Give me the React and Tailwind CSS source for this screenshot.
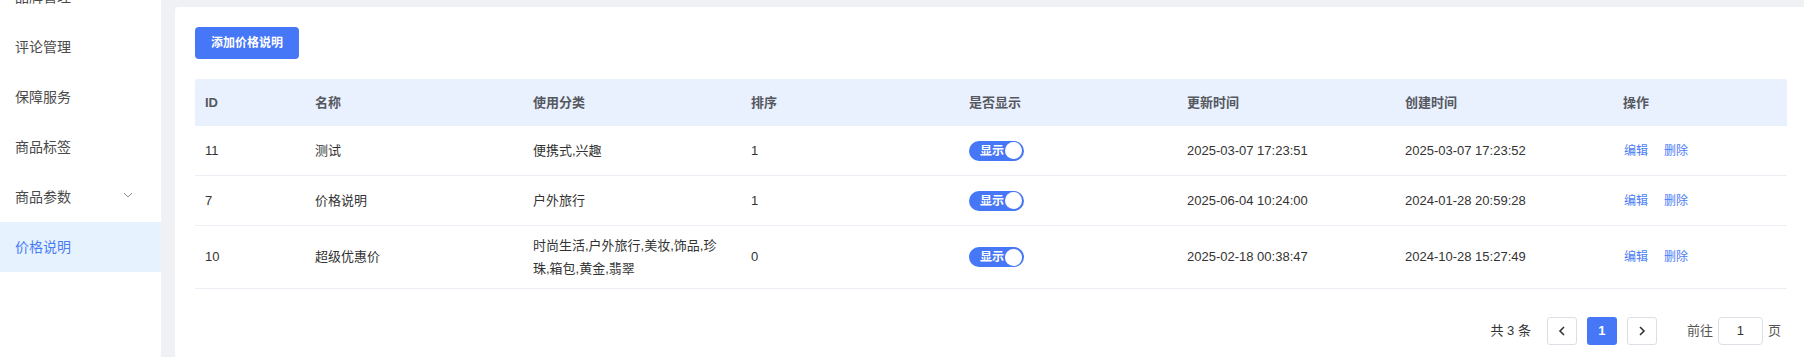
import React from "react";

const menu = [
  { name: "品牌管理" },
  { name: "评论管理" },
  { name: "保障服务" },
  { name: "商品标签" },
  { name: "商品参数", sub: true },
  { name: "价格说明", active: true },
];

const rows = [
  { id: 11, name: "测试", cats: "便携式,兴趣", sort: 1, updated: "2025-03-07 17:23:51", created: "2025-03-07 17:23:52" },
  { id: 7, name: "价格说明", cats: "户外旅行", sort: 1, updated: "2025-06-04 10:24:00", created: "2024-01-28 20:59:28" },
  {
    id: 10,
    name: "超级优惠价",
    cats: "时尚生活,户外旅行,美妆,饰品,珍珠,箱包,黄金,翡翠",
    sort: 0,
    updated: "2025-02-18 00:38:47",
    created: "2024-10-28 15:27:49",
    tall: true,
  },
];

const Switch = () => {
  return (
    <div className="flex items-center w-[55px] h-[20px] rounded-full bg-[#4677f6] pl-[11px] pr-[2px]">
      <span className="text-[12px] font-bold text-white leading-none">显示</span>
      <span className="ml-auto w-[17px] h-[17px] rounded-full bg-white"></span>
    </div>
  );
};

const Sidebar = () => {
  return (
    <aside className="w-[161px] shrink-0 bg-white">
      <ul className="-mt-[28px]">
        {menu.map((m) => (
          <li
            key={m.name}
            className={
              m.active
                ? "h-[50px] flex items-center pl-[15px] pr-[28px] text-[14px] text-[#4a7cf6] bg-[#e6f2fe]"
                : "h-[50px] flex items-center pl-[15px] pr-[28px] text-[14px] text-[#4a4a4a]"
            }
          >
            <span>{m.name}</span>
            {m.sub && (
              <svg className="ml-auto mt-[-4px]" width="10" height="6" viewBox="0 0 10 6" fill="none">
                <path d="M1 1l4 4 4-4" stroke="#8a8d93" strokeWidth="1" />
              </svg>
            )}
          </li>
        ))}
      </ul>
    </aside>
  );
};

const cols = "grid grid-cols-[110px_repeat(6,1fr)_174px]";

const PriceTable = () => {
  return (
    <div className="text-[13px]">
      <div className={`${cols} h-[47px] items-center bg-[#eaf1fe] rounded-t-[3px] text-[#55585e] font-bold`}>
        {["ID", "名称", "使用分类", "排序", "是否显示", "更新时间", "创建时间", "操作"].map((h) => (
          <div key={h} className="px-[10px]">{h}</div>
        ))}
      </div>
      {rows.map((r) => (
        <div
          key={r.id}
          className={`${cols} ${r.tall ? "h-[63px]" : "h-[50px]"} items-center border-b border-[#ebeef5] text-[#333]`}
        >
          <div className="px-[10px]">{r.id}</div>
          <div className="px-[10px]">{r.name}</div>
          <div className="px-[10px] leading-[23px]">
            <div className="max-w-[190px]">{r.cats}</div>
          </div>
          <div className="px-[10px]">{r.sort}</div>
          <div className="px-[10px]">
            <Switch />
          </div>
          <div className="px-[10px]">{r.updated}</div>
          <div className="px-[10px]">{r.created}</div>
          <div className="px-[11px] flex gap-[16px] text-[12px] text-[#4a7cf6]">
            <span>编辑</span>
            <span>删除</span>
          </div>
        </div>
      ))}
    </div>
  );
};

const Pagination = () => {
  return (
    <div className="flex items-center justify-end pr-[6px] mt-[28px] text-[13px] text-[#333]">
      <span className="mr-[16px]">共 3 条</span>
      <button className="w-[30px] h-[28px] flex items-center justify-center border border-[#dcdfe6] rounded-[3px] bg-white">
        <svg width="8" height="10" viewBox="0 0 8 10" fill="none">
          <path d="M6 1L2 5l4 4" stroke="#333" strokeWidth="1.6" />
        </svg>
      </button>
      <button className="ml-[10px] w-[30px] h-[28px] flex items-center justify-center rounded-[3px] bg-[#4677f6] text-white font-bold">
        1
      </button>
      <button className="ml-[10px] w-[30px] h-[28px] flex items-center justify-center border border-[#dcdfe6] rounded-[3px] bg-white">
        <svg width="8" height="10" viewBox="0 0 8 10" fill="none">
          <path d="M2 1l4 4-4 4" stroke="#333" strokeWidth="1.6" />
        </svg>
      </button>
      <span className="ml-[30px] text-[#555]">前往</span>
      <div className="ml-[5px] w-[45px] h-[28px] flex items-center justify-center border border-[#dcdfe6] rounded-[4px]">1</div>
      <span className="ml-[5px] text-[#555]">页</span>
    </div>
  );
};

export default function App() {
  return (
    <div
      className="flex h-[357px] overflow-hidden bg-[#f0f1f5]"
      style={{ fontFamily: '"Liberation Sans", "Noto Sans CJK SC", sans-serif' }}
    >
      <Sidebar />
      <main className="flex-1 pl-[14px] pt-[7px]">
        <div className="bg-white h-full rounded-tl-[4px] pl-[20px] pr-[17px] pt-[20px]">
          <button className="h-[32px] px-[16px] rounded-[4px] bg-[#4677f6] text-white text-[12px] font-bold">
            添加价格说明
          </button>
          <div className="mt-[20px]">
            <PriceTable />
            <Pagination />
          </div>
        </div>
      </main>
    </div>
  );
}
